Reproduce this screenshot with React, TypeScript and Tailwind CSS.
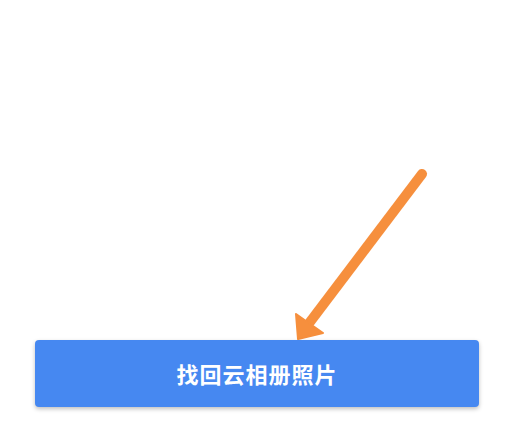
export default function App() {
  return (
    <div className="flex h-[441px] w-[511px] flex-col bg-white">
      {/* pointer arrow drawn above the button */}
      <svg className="block h-[340px] w-[511px] shrink-0" viewBox="0 0 511 340">
        <line x1="422" y1="174" x2="310" y2="322" stroke="#F68F3D" strokeWidth="10" strokeLinecap="round" />
        <polygon points="298,339 296,314 323,333" fill="#F68F3D" stroke="#F68F3D" strokeWidth="2" strokeLinejoin="round" />
      </svg>
      <div className="ml-[35px] mr-[32px]">
        <button
          type="button"
          className="flex h-[67px] w-full items-center justify-center rounded-[4px] bg-[#4688F1] text-[22px] font-bold tracking-[1px] text-white shadow-[0_2px_4px_rgba(0,0,0,0.25)]"
          style={{ fontFamily: '"Noto Sans CJK SC", "Noto Sans", sans-serif' }}
        >
          找回云相册照片
        </button>
      </div>
    </div>
  );
}
